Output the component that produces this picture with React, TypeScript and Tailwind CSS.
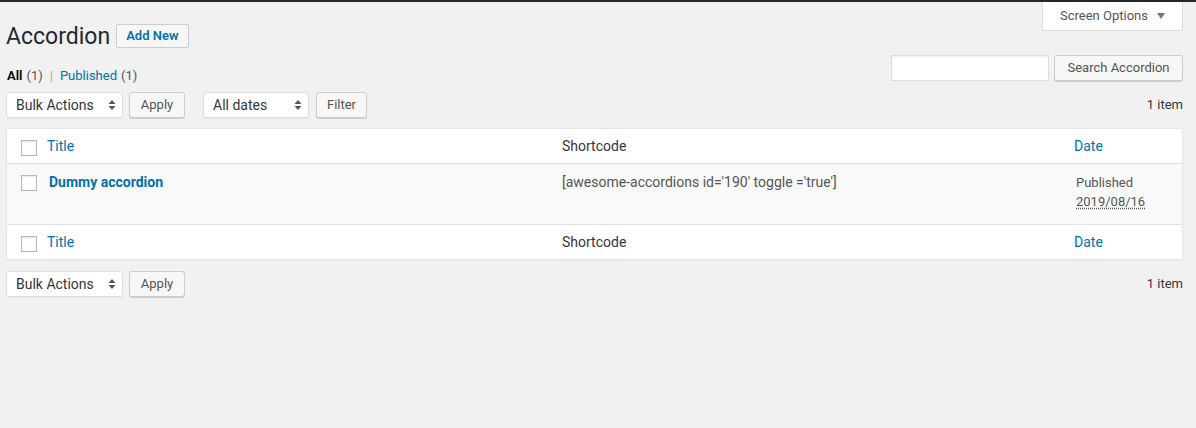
import React from 'react';

const font = { fontFamily: 'Roboto, "Liberation Sans", Arial, sans-serif' };

function SelectBox({ label, width }: { label: string; width: string }) {
  return (
    <div
      className={`${width} h-[26px] flex items-center justify-between pl-[9px] pr-[6px] bg-white border border-[#ddd] rounded-[3px] shadow-[0_1px_1px_rgba(0,0,0,0.04)] text-[14px] text-[#32373c]`}
    >
      <span>{label}</span>
      <svg width="8" height="12" viewBox="0 0 8 12" className="text-[#555]">
        <path d="M4 1 L7.5 5 H0.5 Z" fill="currentColor" />
        <path d="M4 11 L7.5 7 H0.5 Z" fill="currentColor" />
      </svg>
    </div>
  );
}

function Btn({ children, width }: { children: React.ReactNode; width: string }) {
  return (
    <div
      className={`${width} h-[26px] flex items-center justify-center bg-[#f7f7f7] border border-[#ccc] rounded-[3px] shadow-[0_1px_0_#ccc] text-[13px] text-[#555]`}
    >
      {children}
    </div>
  );
}

function Check() {
  return (
    <div className="w-4 h-4 bg-white border border-[#b4b9be] shadow-[inset_0_1px_2px_rgba(0,0,0,0.1)]" />
  );
}

function Tablenav({ withFilter }: { withFilter?: boolean }) {
  return (
    <div className="flex items-center h-[26px]">
      <SelectBox label="Bulk Actions" width="w-[117px]" />
      <div className="ml-[6px]">
        <Btn width="w-[56px]">Apply</Btn>
      </div>
      {withFilter && (
        <>
          <div className="ml-[18px]">
            <SelectBox label="All dates" width="w-[106px]" />
          </div>
          <div className="ml-[7px]">
            <Btn width="w-[51px]">Filter</Btn>
          </div>
        </>
      )}
      <span className="ml-auto text-[13px] text-[#32373c]">1 item</span>
    </div>
  );
}

function HeadRow({ border }: { border: string }) {
  return (
    <div className={`grid grid-cols-[30px_515px_512px_1fr] h-[35px] items-center bg-white ${border}`}>
      <div className="flex justify-end pt-[3px]">
        <Check />
      </div>
      <div className="pl-[10px] pt-[1px] text-[14px] text-[#0073aa]">Title</div>
      <div className="pl-[10px] pt-[1px] text-[14px] text-[#32373c]">Shortcode</div>
      <div className="pl-[10px] pt-[1px] text-[14px] text-[#0073aa]">Date</div>
    </div>
  );
}

export default function App() {
  return (
    <div className="min-h-[428px] bg-[#f1f1f1]" style={font}>
      <div className="h-[2px] bg-[#23282d]" />
      <div className="pl-[6px] pr-[13px]">
        {/* Header area */}
        <div className="flex justify-between items-start">
          <div className="pt-[22px]">
            <div className="flex items-center h-6 gap-[6px]">
              <h1 className="text-[23px] text-[#23282d] leading-none">Accordion</h1>
              <div className="h-6 px-[9px] flex items-center bg-[#f7f7f7] border border-[#ccc] rounded-[2px] text-[13px] font-semibold text-[#0073aa]">
                Add New
              </div>
            </div>
            <div className="mt-[18px] h-5 flex items-center text-[13px] text-[#555] pl-[1px]">
              <span className="font-semibold text-black">All</span>
              <span className="ml-[4px]">(1)</span>
              <span className="mx-[7px] text-[#a0a5aa]">|</span>
              <span className="text-[#0073aa]">Published</span>
              <span className="ml-[4px]">(1)</span>
            </div>
          </div>
          <div className="flex flex-col items-end">
            <div className="w-[141px] h-[29px] flex items-center justify-center gap-[9px] bg-white border border-t-0 border-[#ddd] text-[13px] text-[#555]">
              <span>Screen Options</span>
              <svg width="8" height="6" viewBox="0 0 8 6">
                <path d="M0 0 H8 L4 6 Z" fill="#72777c" />
              </svg>
            </div>
            <div className="mt-[24px] flex items-center gap-[5px]">
              <div className="w-[158px] h-[26px] bg-white border border-[#ddd] shadow-[inset_0_1px_2px_rgba(0,0,0,0.07)]" />
              <Btn width="w-[129px]">Search Accordion</Btn>
            </div>
          </div>
        </div>

        <div className="mt-[6px]">
          <Tablenav withFilter />
        </div>

        {/* Table */}
        <div className="mt-[10px] border border-[#e5e5e5] shadow-[0_1px_1px_rgba(0,0,0,0.04)]">
          <HeadRow border="border-b border-[#e1e1e1]" />
          <div className="grid grid-cols-[30px_515px_512px_1fr] h-[60px] items-start bg-[#f9f9f9]">
            <div className="flex justify-end pt-[11px]">
              <Check />
            </div>
            <div className="pl-[12px] pt-[9px] text-[14px] leading-[19px] font-bold text-[#0073aa]">
              Dummy accordion
            </div>
            <div className="pl-[10px] pt-[9px] text-[14px] leading-[19px] text-[#555]">
              [awesome-accordions id='190' toggle ='true']
            </div>
            <div className="pl-[12px] pt-[9px] text-[13px] leading-[19px] text-[#555]">
              <div>Published</div>
              <div className="underline decoration-dotted decoration-[#555] underline-offset-2">2019/08/16</div>
            </div>
          </div>
          <HeadRow border="border-t border-[#e1e1e1]" />
        </div>

        <div className="mt-[11px]">
          <Tablenav />
        </div>
      </div>
    </div>
  );
}
